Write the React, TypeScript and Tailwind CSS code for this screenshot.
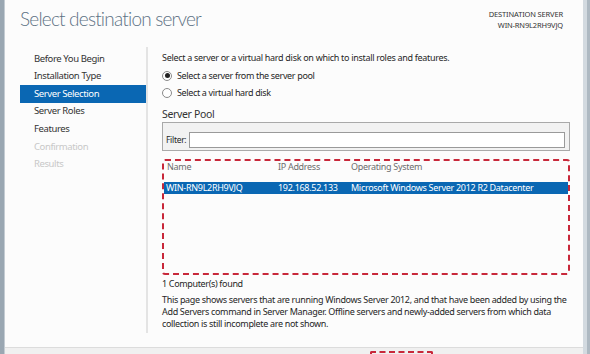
import React from "react";

const NAV = [
  { label: "Before You Begin", state: "normal" },
  { label: "Installation Type", state: "normal" },
  { label: "Server Selection", state: "active" },
  { label: "Server Roles", state: "normal" },
  { label: "Features", state: "normal" },
  { label: "Confirmation", state: "disabled" },
  { label: "Results", state: "disabled" },
];

const font = { fontFamily: '"Noto Sans", "Open Sans", sans-serif' };

function Radio({ checked, label }: { checked?: boolean; label: string }) {
  return (
    <div className="flex items-center gap-[5px] h-[17px]">
      <span className="w-[10px] h-[10px] rounded-full border border-[#8a8a8a] bg-white flex items-center justify-center">
        {checked && <span className="w-[5px] h-[5px] rounded-full bg-[#222]" />}
      </span>
      <span className="text-[9px] tracking-[-0.35px]">{label}</span>
    </div>
  );
}

export default function App() {
  return (
    <div className="w-[590px] h-[354px] flex overflow-hidden text-[#1e1e1e]" style={font}>
      <div className="w-[4px] shrink-0 bg-[#9aa7b2]" />
      <div className="w-[1px] shrink-0 bg-[#c4ccd3]" />
      <div className="flex-1 min-w-0 flex flex-col bg-[#fcfcfc]">
        {/* Header */}
        <div className="h-[47px] shrink-0 flex justify-between pl-[15px] pr-[20px]">
          <h1
            className="text-[19px] leading-[24px] font-light text-[#5e7284] mt-[7px] tracking-[-0.8px]"
            style={{ fontFamily: 'Lato, "Noto Sans", sans-serif' }}
          >
            Select destination server
          </h1>
          <div className="text-right text-[7.5px] leading-[11px] mt-[9px] tracking-[-0.15px] text-[#333]">
            <div>DESTINATION SERVER</div>
            <div>WIN-RN9L2RH9VJQ</div>
          </div>
        </div>

        {/* Body */}
        <div className="flex flex-1 min-h-0">
          <div className="w-[143px] shrink-0 pl-[15px] mb-[14px] border-r-2 border-[#e4e4e4] pt-[3px] text-[9.5px] tracking-[-0.4px]">
            {NAV.map((item) => (
              <div
                key={item.label}
                className={`h-[17.6px] flex items-center pl-[14px] ${
                  item.state === "active"
                    ? "bg-[#0a67b3] text-white"
                    : item.state === "disabled"
                    ? "text-[#c8c8c8]"
                    : "text-[#333]"
                }`}
              >
                {item.label}
              </div>
            ))}
          </div>

          <div className="flex-1 min-w-0 pl-[14px] pr-[13px] pt-[3px] text-[#262626]">
            <p className="h-[16px] text-[9px] leading-[16px] tracking-[-0.3px]">
              Select a server or a virtual hard disk on which to install roles and features.
            </p>
            <div className="mt-[1px]">
              <Radio checked label="Select a server from the server pool" />
              <Radio label="Select a virtual hard disk" />
            </div>
            <div className="mt-[5px] text-[10.5px] tracking-[-0.35px] text-[#333] h-[16px] leading-[16px]">
              Server Pool
            </div>

            <div className="border border-[#a9a9a9] bg-[#f2f2f2] h-[29px] flex items-center pt-[9px] pb-[2px] px-[3px] gap-[3px]">
              <span className="text-[8.5px] tracking-[-0.3px]">Filter:</span>
              <div className="flex-1 h-[16px] bg-white border border-[#9a9a9a] mr-[1px]" />
            </div>

            <div className="mt-[8px] h-[116px] border-2 border-dashed border-[#c8283a] rounded-[3px] text-[9px] tracking-[-0.3px]">
              <div className="flex h-[12px] items-center text-[#6d6d6d]">
                <span className="w-[114px] pl-[3px]">Name</span>
                <span className="w-[73px]">IP Address</span>
                <span>Operating System</span>
              </div>
              <div className="flex h-[12px] mt-[9px] items-center bg-[#0a67b3] text-white">
                <span className="w-[114px] pl-[2px]">WIN-RN9L2RH9VJQ</span>
                <span className="w-[73px]">192.168.52.133</span>
                <span>Microsoft Windows Server 2012 R2 Datacenter</span>
              </div>
            </div>

            <div className="mt-[3px] text-[9px] tracking-[-0.35px] h-[12px] leading-[12px]">
              1 Computer(s) found
            </div>
            <p className="text-[9px] leading-[12px] mt-[4px] tracking-[-0.33px] whitespace-nowrap">
              This page shows servers that are running Windows Server 2012, and that have been added by using the
              <br />
              Add Servers command in Server Manager. Offline servers and newly-added servers from which data
              <br />
              collection is still incomplete are not shown.
            </p>
          </div>
        </div>

        {/* Footer */}
        <div className="h-[7px] shrink-0 border-t border-[#dcdcdc] bg-[#f0f0f0] relative">
          <div className="absolute left-[365px] top-[3px] w-[63px] h-[12px] border-2 border-dashed border-[#c8283a] rounded-[2px]" />
        </div>
      </div>
      <div className="w-[4px] shrink-0 bg-[#d3dae0]" />
      <div className="w-[3px] shrink-0 bg-[#aeb9c2]" />
    </div>
  );
}
